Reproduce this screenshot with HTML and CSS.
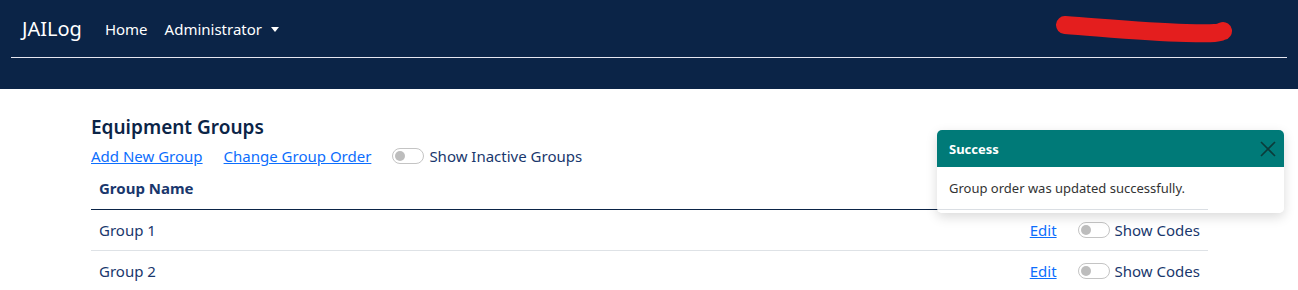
FILE: index.html
```html
<!DOCTYPE html>
<html lang="en">
<head>
  <meta charset="UTF-8">
  <title>JAILog - Equipment Groups</title>
  <link rel="stylesheet" href="styles.css">
</head>
<body>

<nav class="navbar">
  <div class="navbar-top">
    <a class="brand" href="#">JAILog</a>
    <ul class="nav-links">
      <li><a href="#">Home</a></li>
      <li><a href="#" class="dropdown">Administrator</a></li>
    </ul>
    <div class="user-scribble">
      <svg width="180" height="36" viewBox="0 0 180 36">
        <path d="M9 9 C 50 12, 90 16, 130 17 S 162 16, 167 15" stroke="#e41e1e" stroke-width="18" stroke-linecap="round" fill="none"/>
      </svg>
    </div>
  </div>
</nav>

<main class="container">
  <h1 class="page-title">Equipment Groups</h1>
  <div class="toolbar">
    <a href="#">Add New Group</a>
    <a href="#">Change Group Order</a>
    <label class="switch-label"><span class="switch"></span>Show Inactive Groups</label>
  </div>

  <table class="groups">
    <thead>
      <tr><th>Group Name</th><th></th></tr>
    </thead>
    <tbody>
      <tr>
        <td>Group 1</td>
        <td class="actions"><a href="#">Edit</a><label class="switch-label"><span class="switch"></span>Show Codes</label></td>
      </tr>
      <tr>
        <td>Group 2</td>
        <td class="actions"><a href="#">Edit</a><label class="switch-label"><span class="switch"></span>Show Codes</label></td>
      </tr>
    </tbody>
  </table>
</main>

<div class="toast">
  <div class="toast-header">
    <strong>Success</strong>
    <button class="close" aria-label="Close">
      <svg width="16" height="16" viewBox="0 0 16 16"><path d="M1 1 L15 15 M15 1 L1 15" stroke="#0b3b3a" stroke-width="1.6"/></svg>
    </button>
  </div>
  <div class="toast-body">Group order was updated successfully.</div>
</div>

</body>
</html>
```

FILE: styles.css
```css
* {
  margin: 0;
  padding: 0;
  box-sizing: border-box;
}

body {
  font-family: "Noto Sans", "Open Sans", sans-serif;
  font-size: 15px;
  color: #19376d;
  background: white;
  overflow: hidden;
}

a {
  color: #0d6efd;
}

.navbar {
  background: #0b2447;
  height: 89px;
  padding: 0 11px;
}

.navbar-top {
  display: flex;
  align-items: center;
  height: 58px;
  border-bottom: 1px solid #e6e6f0;
  padding-left: 11px;
}

.brand {
  color: white;
  text-decoration: none;
  font-size: 20px;
  margin-right: 23px;
}

.nav-links {
  display: flex;
  list-style: none;
  gap: 17px;
}

.nav-links a {
  color: white;
  text-decoration: none;
  font-size: 15px;
}

.dropdown::after {
  content: "";
  display: inline-block;
  margin-left: 9px;
  vertical-align: 3px;
  border-top: 5px solid white;
  border-left: 4px solid transparent;
  border-right: 4px solid transparent;
}

.user-scribble {
  margin-left: auto;
  margin-right: 51px;
  align-self: flex-start;
  margin-top: 16px;
}

.user-scribble svg {
  display: block;
}

.container {
  margin: 0 90px 0 91px;
  padding-top: 25px;
}

.page-title {
  font-size: 19px;
  font-weight: 600;
  color: #0b2447;
  line-height: 26px;
}

.toolbar {
  display: flex;
  align-items: center;
  gap: 21px;
  margin-top: 5px;
  line-height: 22px;
}

.switch-label {
  display: flex;
  align-items: center;
  gap: 5px;
}

.switch {
  display: inline-block;
  width: 32px;
  height: 16px;
  border: 1px solid #c4c4c4;
  border-radius: 8px;
  position: relative;
}

.switch::before {
  content: "";
  position: absolute;
  left: 2px;
  top: 2px;
  width: 10px;
  height: 10px;
  border-radius: 50%;
  background: #bdbdbd;
}

.groups {
  width: 1117px;
  border-collapse: collapse;
  margin-top: 1px;
}

.groups th {
  text-align: left;
  font-weight: 700;
  padding: 9px 8px;
  height: 41px;
  border-bottom: 1px solid #0b2447;
}

.groups td {
  padding: 0 8px;
  height: 41px;
  border-bottom: 1px solid #dee2e6;
}

.groups tr:last-child td {
  border-bottom: none;
}

.actions {
  display: flex;
  justify-content: flex-end;
  align-items: center;
  gap: 21px;
}

.toast {
  position: absolute;
  left: 937px;
  top: 130px;
  width: 347px;
  background: rgba(255, 255, 255, 0.85);
  border-radius: 5px;
  box-shadow: 0 4px 12px rgba(0, 0, 0, 0.15);
  overflow: hidden;
}

.toast-header {
  display: flex;
  align-items: center;
  justify-content: space-between;
  height: 37px;
  padding: 0 12px;
  background: #007a78;
  color: white;
  font-size: 13px;
}

.close {
  background: none;
  border: none;
  display: flex;
  margin-right: -4px;
}

.toast-body {
  padding: 12px 12px 16px;
  font-size: 13px;
  color: #333;
}
```
